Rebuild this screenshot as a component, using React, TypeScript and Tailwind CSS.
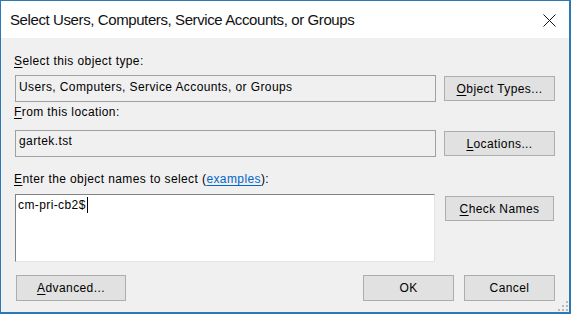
import React from "react";

function Btn({ children, className = "" }: { children: React.ReactNode; className?: string }) {
  return (
    <div
      className={`flex items-center justify-center border border-[#adadad] bg-[#e1e1e1] text-[12px] leading-[14px] tracking-[0.4px] text-black ${className}`}
    >
      {children}
    </div>
  );
}

function U({ children }: { children: React.ReactNode }) {
  return <span className="underline underline-offset-[2px]">{children}</span>;
}

export default function App() {
  return (
    <div className="flex h-[314px] w-[571px] flex-col border-b-2 border-l border-r-2 border-t border-[#2b79b7] bg-[#f0f0f0] font-['Liberation_Sans',Arial,sans-serif] text-[12px] leading-[14px] tracking-[0.4px] text-black">
      {/* Title bar */}
      <div className="flex h-[37px] shrink-0 items-center justify-between bg-white pl-[9px] pr-[13px]">
        <span className="text-[15px] tracking-[-0.4px] text-[#111]">
          Select Users, Computers, Service Accounts, or Groups
        </span>
        <svg width="13" height="13" viewBox="0 0 13 13" className="mt-[1px]">
          <path d="M0.5 0.5 L12.5 12.5 M12.5 0.5 L0.5 12.5" stroke="#111" strokeWidth="1" />
        </svg>
      </div>

      {/* Body */}
      <div className="relative flex flex-1 flex-col pl-[13px]">
        <div className="mt-[16px] h-[14px]">
          <U>S</U>elect this object type:
        </div>
        <div className="mt-[7px] flex items-start">
          <div className="ml-[1px] h-[27px] w-[421px] border border-[#a0a0a0] pl-[3px] pt-[4px]">
            Users, Computers, Service Accounts, or Groups
          </div>
          <Btn className="ml-[8px] mt-[1px] h-[25px] w-[111px]">
            <span>
              <U>O</U>bject Types...
            </span>
          </Btn>
        </div>

        <div className="mt-[3px] h-[14px]">
          <U>F</U>rom this location:
        </div>
        <div className="mt-[11px] flex items-start">
          <div className="ml-[1px] h-[27px] w-[421px] border border-[#a0a0a0] pl-[3px] pt-[3px]">
            gartek.tst
          </div>
          <Btn className="ml-[8px] mt-[1px] h-[25px] w-[111px]">
            <span>
              <U>L</U>ocations...
            </span>
          </Btn>
        </div>

        <div className="mt-[15px] h-[14px]">
          <U>E</U>nter the object names to select (
          <span className="text-[#0066cc] underline underline-offset-[2px]">examples</span>):
        </div>
        <div className="mt-[8px] flex items-start">
          <div className="ml-[1px] flex h-[68px] w-[420px] items-start border border-b-[#e3e3e3] border-l-[#828282] border-r-[#e3e3e3] border-t-[#828282] bg-white pl-[2px] pt-[3px]">
            <span>cm-pri-cb2$</span>
            <span className="ml-[1px] mt-[-1px] h-[16px] w-px bg-black" />
          </div>
          <Btn className="ml-[10px] mt-[2px] h-[25px] w-[109px]">
            <span>
              <U>C</U>heck Names
            </span>
          </Btn>
        </div>

        <div className="mt-[13px] flex items-start">
          <Btn className="ml-[2px] h-[26px] w-[110px]">
            <span>
              <U>A</U>dvanced...
            </span>
          </Btn>
          <Btn className="ml-[237px] h-[26px] w-[91px]">OK</Btn>
          <Btn className="ml-[10px] h-[26px] w-[91px]">Cancel</Btn>
        </div>

        {/* resize grip */}
        <svg width="10" height="10" viewBox="0 0 10 10" className="absolute bottom-[1px] right-[1px]">
          <rect x="8" y="0" width="2" height="2" fill="#b8b8b8" />
          <rect x="4" y="4" width="2" height="2" fill="#b8b8b8" />
          <rect x="8" y="4" width="2" height="2" fill="#b8b8b8" />
          <rect x="0" y="8" width="2" height="2" fill="#b8b8b8" />
          <rect x="4" y="8" width="2" height="2" fill="#b8b8b8" />
          <rect x="8" y="8" width="2" height="2" fill="#b8b8b8" />
        </svg>
      </div>
    </div>
  );
}
